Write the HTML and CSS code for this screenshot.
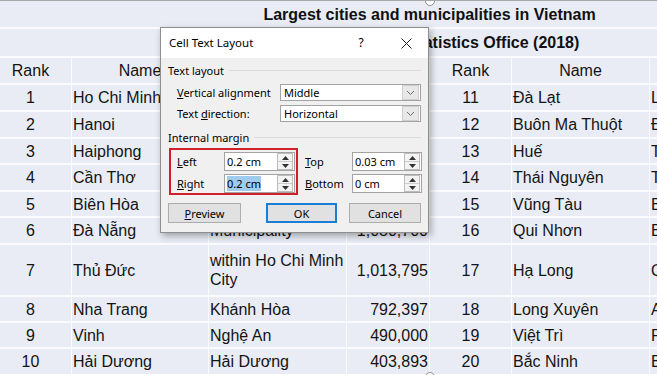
FILE: index.html
```html
<!DOCTYPE html>
<html lang="en">
<head>
<meta charset="utf-8">
<title>Cell Text Layout</title>
<link rel="stylesheet" href="styles.css">
</head>
<body>
<div class="page">
  <div class="sheet">
    <div class="cell title">Largest cities and municipalities in Vietnam</div>
    <div class="cell title">Source: General Statistics Office (2018)</div>

    <div class="cell c">Rank</div><div class="cell c">Name</div><div class="cell c">Province</div><div class="cell c">Population</div>
    <div class="cell c">Rank</div><div class="cell c">Name</div><div class="cell c">Province</div><div class="cell c">Population</div>

    <div class="cell c">1</div><div class="cell">Ho Chi Minh City</div><div class="cell">Municipality</div><div class="cell r">8,993,082</div>
    <div class="cell c">11</div><div class="cell">Đà Lạt</div><div class="cell">Lâm Đồng</div><div class="cell r">425,000</div>

    <div class="cell c">2</div><div class="cell">Hanoi</div><div class="cell">Municipality</div><div class="cell r">8,053,663</div>
    <div class="cell c">12</div><div class="cell">Buôn Ma Thuột</div><div class="cell">Đắk Lắk</div><div class="cell r">375,590</div>

    <div class="cell c">3</div><div class="cell">Haiphong</div><div class="cell">Municipality</div><div class="cell r">2,028,514</div>
    <div class="cell c">13</div><div class="cell">Huế</div><div class="cell">Thừa Thiên Huế</div><div class="cell r">354,124</div>

    <div class="cell c">4</div><div class="cell">Cần Thơ</div><div class="cell">Municipality</div><div class="cell r">1,235,171</div>
    <div class="cell c">14</div><div class="cell">Thái Nguyên</div><div class="cell">Thái Nguyên</div><div class="cell r">340,403</div>

    <div class="cell c">5</div><div class="cell">Biên Hòa</div><div class="cell">Đồng Nai</div><div class="cell r">1,104,000</div>
    <div class="cell c">15</div><div class="cell">Vũng Tàu</div><div class="cell">Bà Rịa–Vũng Tàu</div><div class="cell r">327,000</div>

    <div class="cell c">6</div><div class="cell">Đà Nẵng</div><div class="cell">Municipality</div><div class="cell r">1,080,700</div>
    <div class="cell c">16</div><div class="cell">Qui Nhơn</div><div class="cell">Bình Định</div><div class="cell r">311,000</div>

    <div class="cell c">7</div><div class="cell">Thủ Đức</div><div class="cell">within Ho Chi Minh City</div><div class="cell r">1,013,795</div>
    <div class="cell c">17</div><div class="cell">Hạ Long</div><div class="cell">Quảng Ninh</div><div class="cell r">300,267</div>

    <div class="cell c">8</div><div class="cell">Nha Trang</div><div class="cell">Khánh Hòa</div><div class="cell r">792,397</div>
    <div class="cell c">18</div><div class="cell">Long Xuyên</div><div class="cell">An Giang</div><div class="cell r">278,658</div>

    <div class="cell c">9</div><div class="cell">Vinh</div><div class="cell">Nghệ An</div><div class="cell r">490,000</div>
    <div class="cell c">19</div><div class="cell">Việt Trì</div><div class="cell">Phú Thọ</div><div class="cell r">216,000</div>

    <div class="cell c">10</div><div class="cell">Hải Dương</div><div class="cell">Hải Dương</div><div class="cell r">403,893</div>
    <div class="cell c">20</div><div class="cell">Bắc Ninh</div><div class="cell">Bắc Ninh</div><div class="cell r">197,000</div>
  </div>

  <span class="handle handle-top"></span>
  <span class="handle handle-bottom"></span>

  <div class="dialog">
    <div class="titlebar">
      <span class="title-text">Cell Text Layout</span>
      <span class="help">?</span>
      <span class="close">
        <svg width="11" height="11" viewBox="0 0 11 11"><path d="M0.5 0.5 L10.5 10.5 M10.5 0.5 L0.5 10.5" stroke="#1e1e1e" stroke-width="1" fill="none"/></svg>
      </span>
    </div>
    <div class="dlg-body">
      <div class="group-title first"><span>Text layout</span><span class="rule"></span></div>
      <div class="field-row first-field">
        <span class="field-label"><u>V</u>ertical alignment</span>
        <div class="select"><span class="select-value">Middle</span><span class="select-btn"><svg width="9" height="6" viewBox="0 0 9 6"><path d="M1 1 L4.5 4.5 L8 1" stroke="#6a6a6a" stroke-width="1" fill="none"/></svg></span></div>
      </div>
      <div class="field-row">
        <span class="field-label">Text <u>d</u>irection:</span>
        <div class="select"><span class="select-value">Horizontal</span><span class="select-btn"><svg width="9" height="6" viewBox="0 0 9 6"><path d="M1 1 L4.5 4.5 L8 1" stroke="#6a6a6a" stroke-width="1" fill="none"/></svg></span></div>
      </div>
      <div class="group-title second"><span>Internal margin</span><span class="rule"></span></div>
      <div class="margins">
        <div class="margin-box">
          <span class="m-label"><u>L</u>eft</span>
          <div class="spin"><span class="spin-value">0.2 cm</span><span class="spin-btns"><span class="spin-half"><svg width="7" height="4" viewBox="0 0 7 4"><path d="M0 4 L3.5 0 L7 4 Z" fill="#333"/></svg></span><span class="spin-half"><svg width="7" height="4" viewBox="0 0 7 4"><path d="M0 0 L3.5 4 L7 0 Z" fill="#333"/></svg></span></span></div>
          <span class="m-label"><u>R</u>ight</span>
          <div class="spin"><span class="spin-value"><span class="sel">0.2 cm</span></span><span class="spin-btns"><span class="spin-half"><svg width="7" height="4" viewBox="0 0 7 4"><path d="M0 4 L3.5 0 L7 4 Z" fill="#333"/></svg></span><span class="spin-half"><svg width="7" height="4" viewBox="0 0 7 4"><path d="M0 0 L3.5 4 L7 0 Z" fill="#333"/></svg></span></span></div>
        </div>
        <div class="margin-plain">
          <span class="m-label"><u>T</u>op</span>
          <div class="spin"><span class="spin-value">0.03 cm</span><span class="spin-btns"><span class="spin-half"><svg width="7" height="4" viewBox="0 0 7 4"><path d="M0 4 L3.5 0 L7 4 Z" fill="#333"/></svg></span><span class="spin-half"><svg width="7" height="4" viewBox="0 0 7 4"><path d="M0 0 L3.5 4 L7 0 Z" fill="#333"/></svg></span></span></div>
          <span class="m-label"><u>B</u>ottom</span>
          <div class="spin"><span class="spin-value">0 cm</span><span class="spin-btns"><span class="spin-half"><svg width="7" height="4" viewBox="0 0 7 4"><path d="M0 4 L3.5 0 L7 4 Z" fill="#333"/></svg></span><span class="spin-half"><svg width="7" height="4" viewBox="0 0 7 4"><path d="M0 0 L3.5 4 L7 0 Z" fill="#333"/></svg></span></span></div>
        </div>
      </div>
      <div class="buttons">
        <span class="btn btn-preview"><u>P</u>review</span>
        <span class="btn btn-ok">OK</span>
        <span class="btn btn-cancel">Cancel</span>
      </div>
    </div>
  </div>
</div>
</body>
</html>
```

FILE: styles.css
```css
html, body {
  margin: 0;
  padding: 0;
  background: #ffffff;
  overflow: hidden;
}

.page {
  position: relative;
  width: 657px;
  height: 375px;
  overflow: hidden;
  border-top: 1px solid #a9a9a9;
  box-sizing: border-box;
  font-family: "Liberation Sans", Arial, sans-serif;
  font-size: 16px;
  color: #141414;
}

.sheet {
  display: grid;
  grid-template-columns: 81px 136px 137px 82px 81px 137px 137px 81px;
  grid-template-rows: 26px 27px 25px 25px 25px 24px 25px 24px 25px 50px 24px 24px 25px;
  column-gap: 1px;
  row-gap: 2px;
  background: #fbfbfd;
  margin-left: -10px;
  width: max-content;
}

.cell {
  background: #e9ecf5;
  display: flex;
  align-items: center;
  padding: 0 1px;
  line-height: 19px;
  white-space: normal;
  overflow: hidden;
}

.title {
  grid-column: 1 / -1;
  justify-content: center;
  font-weight: bold;
  color: #111;
}

.c { justify-content: center; }
.r { justify-content: flex-end; }

.handle {
  position: absolute;
  width: 8px;
  height: 8px;
  border: 1px solid #8d8d8d;
  border-radius: 50%;
  background: #ffffff;
  left: 425px;
}
.handle-top { top: -5px; }
.handle-bottom { top: 371px; }

/* Dialog */
.dialog {
  position: absolute;
  left: 160px;
  top: 26px;
  width: 269px;
  height: 206px;
  box-sizing: border-box;
  border: 1px solid #8e8e8e;
  background: #f0f0f0;
  box-shadow: 2px 3px 7px rgba(0, 0, 0, 0.32);
  font-family: "Noto Sans", "Liberation Sans", sans-serif;
  font-size: 11px;
  color: #000;
  display: flex;
  flex-direction: column;
}

.titlebar {
  height: 30px;
  box-sizing: border-box;
  padding-bottom: 2px;
  background: #ffffff;
  display: flex;
  align-items: center;
  padding-left: 8px;
  font-size: 11.5px;
  flex: none;
}
.title-text { flex: 1; }
.help {
  width: 16px;
  text-align: center;
  margin-right: 15px;
  font-size: 12px;
}
.close {
  width: 44px;
  display: flex;
  justify-content: center;
  align-items: center;
  padding-top: 2px;
}

.dlg-body {
  padding: 0 7px;
}

.group-title {
  display: flex;
  align-items: center;
  height: 14px;
  gap: 5px;
}
.group-title.first { margin-top: 5px; }
.group-title.second { margin-top: 8px; }
.rule {
  flex: 1;
  border-top: 1px solid #dadada;
  margin-top: 1px;
}

.field-row {
  display: flex;
  align-items: center;
  margin-left: 9px;
  margin-top: 4px;
}
.field-row.first-field { margin-top: 7px; }
.field-label { width: 103px; }

.select {
  flex: 1;
  height: 17px;
  box-sizing: border-box;
  border: 1px solid #a3a3a3;
  background: #ffffff;
  display: flex;
  align-items: center;
}
.select-value {
  flex: 1;
  padding-left: 3px;
}
.select-btn {
  width: 15px;
  height: 13px;
  margin-right: 1px;
  background: #e8e8e8;
  border: 1px solid #cfcfcf;
  display: flex;
  align-items: center;
  justify-content: center;
}

u { text-decoration: underline; text-underline-offset: 1px; }

.margins {
  display: flex;
  margin-top: 4px;
  margin-left: 1px;
}
.margin-box {
  border: 2px solid #d0202c;
  padding: 2px 1px 0 6px;
  display: grid;
  grid-template-columns: 47px 71px;
  grid-template-rows: 19px 19px;
  row-gap: 3px;
  align-items: center;
}
.margin-plain {
  margin-left: 7px;
  padding: 4px 0 0;
  display: grid;
  grid-template-columns: 47px 70px;
  grid-template-rows: 19px 19px;
  row-gap: 3px;
  align-items: center;
}

.spin {
  height: 19px;
  box-sizing: border-box;
  border: 1px solid #a3a3a3;
  background: #ffffff;
  display: flex;
  align-items: center;
}
.spin-value {
  flex: 1;
  padding-left: 2px;
}
.sel {
  background: #9fcbee;
}
.spin-btns {
  width: 14px;
  height: 15px;
  margin-right: 1px;
  border: 1px solid #bdbdbd;
  background: #f3f3f3;
  display: flex;
  flex-direction: column;
}
.spin-half {
  flex: 1;
  display: flex;
  align-items: center;
  justify-content: center;
}
.spin-half + .spin-half {
  border-top: 1px solid #cdcdcd;
}

.buttons {
  display: flex;
  margin-top: 8px;
}
.btn {
  height: 20px;
  box-sizing: border-box;
  border: 1px solid #adadad;
  background: #e1e1e1;
  display: flex;
  align-items: center;
  justify-content: center;
}
.btn-preview { width: 73px; }
.btn-ok {
  width: 71px;
  margin-left: 25px;
  border: 2px solid #1a7fd4;
}
.btn-cancel {
  width: 72px;
  margin-left: 12px;
}
```
